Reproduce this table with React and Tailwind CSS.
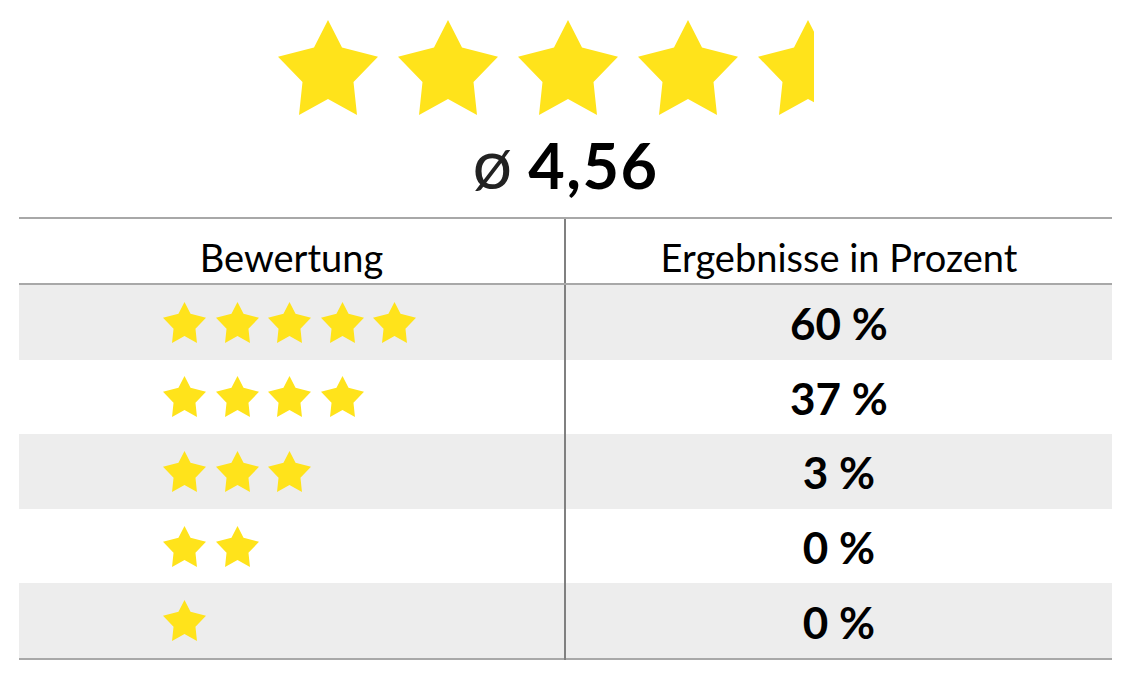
import React from "react";

const STAR_POINTS =
  "50,0 64,27.5 100,36.7 75.5,62 79,95 50,79 21,95 24.5,62 0,36.7 36,27.5";

function Star({ className }) {
  return (
    <svg viewBox="0 0 100 95" className={className} preserveAspectRatio="none">
      <polygon points={STAR_POINTS} fill="#ffe31b" />
    </svg>
  );
}

const rows = [
  { stars: 5, pct: "60 %", gray: true },
  { stars: 4, pct: "37 %", gray: false },
  { stars: 3, pct: "3 %", gray: true },
  { stars: 2, pct: "0 %", gray: false },
  { stars: 1, pct: "0 %", gray: true },
];

export default function App() {
  return (
    <div
      className="w-[1131px] h-[684px] bg-white overflow-hidden"
      style={{ fontFamily: "Lato, 'Noto Sans', sans-serif" }}
    >
      {/* big stars */}
      <div className="flex justify-center gap-[20px] pt-[20px] ml-[4px]">
        {[0, 1, 2, 3].map((i) => (
          <Star key={i} className="w-[100px] h-[95px] block" />
        ))}
        <div className="w-[100px] h-[95px]">
          <div className="w-[56px] h-[95px] overflow-hidden">
            <Star className="w-[100px] h-[95px] block" />
          </div>
        </div>
      </div>

      {/* average */}
      <div className="flex justify-center items-baseline mt-[11px] h-[72px] leading-[72px]">
        <span className="text-[70px] font-normal text-[#222] mr-[16px]">ø</span>
        <span className="text-[63px] font-bold tracking-[1.5px] text-black">4,56</span>
      </div>

      {/* table */}
      <div className="mx-[19px] mt-[19px] w-[1093px]">
        <div className="flex border-t-2 border-b-2 border-[#a8a8a8] h-[68px]">
          <div className="w-[545px] flex justify-center pt-[15px] text-[38px] leading-[46px] text-black">
            Bewertung
          </div>
          <div className="w-[2px] bg-[#808080]" />
          <div className="flex-1 flex justify-center pt-[15px] text-[38px] leading-[46px] text-black">
            Ergebnisse in Prozent
          </div>
        </div>
        {rows.map((r, idx) => (
          <div
            key={idx}
            className={`flex h-[74.6px] ${r.gray ? "bg-[#ededed]" : "bg-white"}`}
          >
            <div className="w-[545px] flex items-center pl-[144px] gap-[9.5px]">
              {Array.from({ length: r.stars }).map((_, i) => (
                <Star key={i} className="w-[43px] h-[41px] block" />
              ))}
            </div>
            <div className="w-[2px] bg-[#808080]" />
            <div className="flex-1 flex items-center justify-center text-[44px] font-bold text-black leading-none pt-[2px]">
              {r.pct}
            </div>
          </div>
        ))}
        <div className="border-t-2 border-[#a8a8a8] relative">
          <div className="absolute left-[545px] top-[-2px] w-[2px] h-[2px] bg-[#808080]" />
        </div>
      </div>
    </div>
  );
}
